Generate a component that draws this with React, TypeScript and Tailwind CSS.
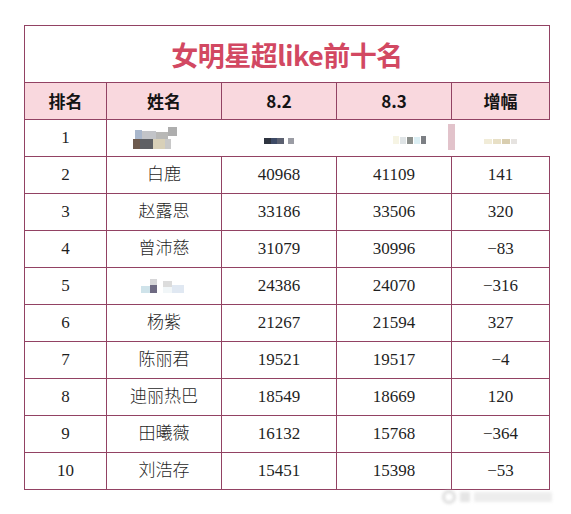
import React from "react";

const rows = [
  { rank: 2, name: "白鹿", a: "40968", b: "41109", d: "141" },
  { rank: 3, name: "赵露思", a: "33186", b: "33506", d: "320" },
  { rank: 4, name: "曾沛慈", a: "31079", b: "30996", d: "-83" },
  { rank: 5, name: "", a: "24386", b: "24070", d: "-316" },
  { rank: 6, name: "杨紫", a: "21267", b: "21594", d: "327" },
  { rank: 7, name: "陈丽君", a: "19521", b: "19517", d: "-4" },
  { rank: 8, name: "迪丽热巴", a: "18549", b: "18669", d: "120" },
  { rank: 9, name: "田曦薇", a: "16132", b: "15768", d: "-364" },
  { rank: 10, name: "刘浩存", a: "15451", b: "15398", d: "-53" },
];

const serif = "font-['Liberation_Serif','Noto_Sans_CJK_SC',serif]";
const cell = "border border-[#924263] h-[37px] p-0 text-center align-middle";

export default function App() {
  return (
    <div className="relative w-[571px] h-[514px] bg-white">
      <div className="pt-[25px] pl-[24px]">
        <table className="table-fixed border-collapse w-[525px] text-[#1f1f1f]">
          <colgroup>
            <col className="w-[82px]" />
            <col className="w-[115px]" />
            <col className="w-[115px]" />
            <col className="w-[115px]" />
            <col className="w-[98px]" />
          </colgroup>
          <tbody>
            {/* title */}
            <tr>
              <td
                colSpan={5}
                className="border border-[#924263] h-[57px] text-center align-middle pt-[2px] font-['Noto_Sans_CJK_SC',sans-serif] font-bold text-[27px] text-[#d24862] tracking-[-0.5px]"
              >
                女明星超like前十名
              </td>
            </tr>

            {/* header */}
            <tr className="bg-[#f9d8de] font-['Noto_Sans_CJK_SC',sans-serif] font-bold text-[17px] text-[#141414]">
              <td className={cell}>排名</td>
              <td className={cell}>姓名</td>
              <td className={cell}>8.2</td>
              <td className={cell}>8.3</td>
              <td className={cell}>增幅</td>
            </tr>

            {/* row 1, blurred in the source */}
            <tr className={`${serif} text-[17px]`}>
              <td className={cell}>1</td>
              <td className={`${cell} border-r-white`}>
                <div className="flex flex-col items-center blur-[0.7px] pr-[16px]">
                  <div className="flex items-end">
                    <div className="w-[7px] h-[9px] bg-[#a9b7cc]" />
                    <div className="w-[14px] h-[8px] bg-[#c2c4c8]" />
                    <div className="w-[12px] h-[7px] bg-[#b8b8b6]" />
                    <div className="w-[9px] h-[9px] bg-[#aeaeae] mb-[3px]" />
                  </div>
                  <div className="flex mr-[8px]">
                    <div className="w-[7px] h-[10px] bg-[#6d5a4e]" />
                    <div className="w-[13px] h-[10px] bg-[#5e6064]" />
                    <div className="w-[12px] h-[10px] bg-[#d8d0b8]" />
                    <div className="w-[6px] h-[10px] bg-[#c8c8c8]" />
                  </div>
                </div>
              </td>
              <td className={`${cell} border-x-white`}>
                <div className="flex justify-center items-center gap-[4px] pt-[5px] blur-[0.5px]">
                  <div className="w-[7px] h-[6px] bg-[#2e3440]" />
                  <div className="w-[6px] h-[6px] bg-[#3d4a66] -ml-[4px]" />
                  <div className="w-[7px] h-[6px] bg-[#5b6070] -ml-[4px]" />
                  <div className="w-[6px] h-[6px] bg-[#9a9ca4]" />
                </div>
              </td>
              <td className={`${cell} border-l-[#924263] border-r-white relative`}>
                <div className="flex justify-center items-end gap-[1px] pt-[4px] pl-[30px] blur-[0.5px]">
                  <div className="w-[6px] h-[8px] bg-[#f6f4e4]" />
                  <div className="w-[6px] h-[7px] bg-[#dfe4e6]" />
                  <div className="w-[6px] h-[7px] bg-[#8d918d]" />
                  <div className="w-[6px] h-[7px] bg-[#dceff4]" />
                  <div className="w-[5px] h-[8px] bg-[#7c7f84]" />
                </div>
                <div className="absolute right-[-4px] top-[4px] w-[7px] h-[26px] bg-[#e2c3cb] blur-[0.5px]" />
              </td>
              <td className={`${cell} border-r-white border-l-white`}>
                <div className="flex justify-center gap-[1px] pt-[6px] blur-[0.6px]">
                  <div className="w-[8px] h-[5px] bg-[#f1ecd8]" />
                  <div className="w-[8px] h-[5px] bg-[#e8e0c6]" />
                  <div className="w-[8px] h-[5px] bg-[#d9ceb0]" />
                  <div className="w-[6px] h-[5px] bg-[#e6e3e0]" />
                </div>
              </td>
            </tr>

            {rows.map((r) => (
              <tr key={r.rank} className={`${serif} text-[17px] text-[#1f1f1f]`}>
                <td className={cell}>{r.rank}</td>
                <td className={`${cell} font-light`}>
                  {r.name ? (
                    r.name
                  ) : (
                    <div className="flex justify-center items-end gap-[6px] blur-[0.5px] pr-[4px]">
                      <div className="flex items-end">
                        <div className="w-[9px] h-[7px] bg-[#cfe3ea]" />
                        <div className="flex flex-col">
                          <div className="w-[7px] h-[6px] bg-[#d6d6d8]" />
                          <div className="w-[7px] h-[8px] bg-[#6e6a82]" />
                        </div>
                      </div>
                      <div className="flex items-end">
                        <div className="flex flex-col">
                          <div className="w-[9px] h-[6px] bg-[#dcdcdc]" />
                          <div className="w-[9px] h-[6px] bg-[#f1f6f8]" />
                        </div>
                        <div className="w-[12px] h-[8px] bg-[#e0e8f2]" />
                      </div>
                    </div>
                  )}
                </td>
                <td className={cell}>{r.a}</td>
                <td className={cell}>{r.b}</td>
                <td className={cell}>{r.d.replace("-", "−")}</td>
              </tr>
            ))}
          </tbody>
        </table>
      </div>

      {/* watermark */}
      <div className="absolute left-[442px] top-[490px] flex items-center gap-[4px] blur-[1.5px] opacity-60">
        <div className="w-[14px] h-[14px] rounded-full border-[3px] border-[#c8c8c8]" />
        <div className="w-[10px] h-[10px] bg-[#d4d4d4]" />
        <div className="w-[78px] h-[10px] bg-[#e2e2e2]" />
      </div>
    </div>
  );
}
